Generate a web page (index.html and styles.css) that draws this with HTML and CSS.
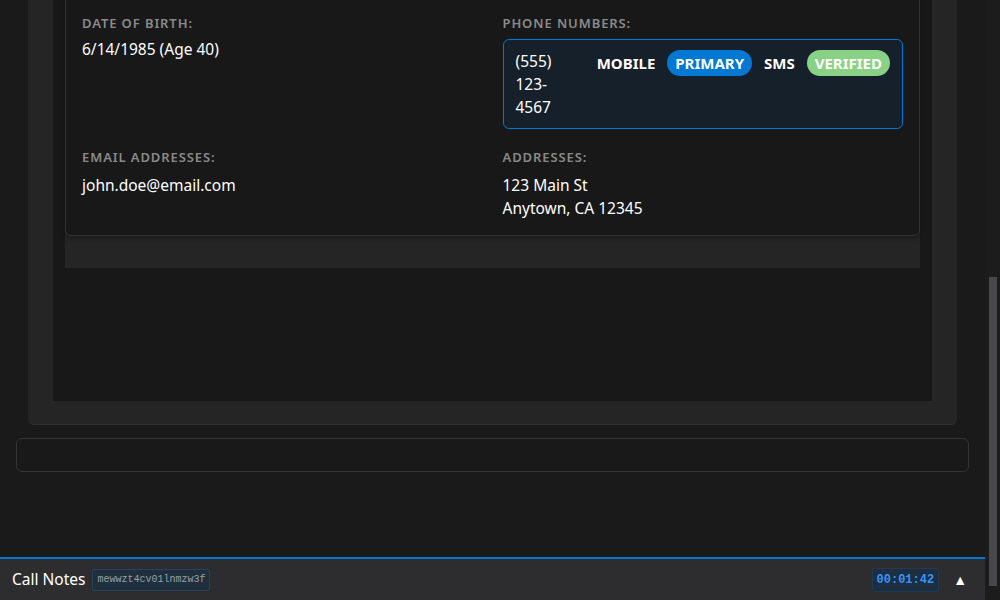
FILE: index.html
```html
<!DOCTYPE html>
<html lang="en">
<head>
<meta charset="utf-8">
<title>Call Notes</title>
<link rel="stylesheet" href="styles.css">
</head>
<body>
<div class="app">
  <div class="main">
    <div class="viewport">
      <div class="scroll-content">
        <div class="panel">
          <div class="panel-inner">
            <div class="section">
              <div class="card">
                <div class="field-grid">
                  <div class="field">
                    <div class="label">Date of Birth:</div>
                    <div class="value">6/14/1985 (Age 40)</div>
                  </div>
                  <div class="field">
                    <div class="label">Phone Numbers:</div>
                    <div class="phone-box">
                      <div class="phone-number">(555) 123-4567</div>
                      <div class="badges">
                        <span class="badge">Mobile</span>
                        <span class="badge badge-primary">Primary</span>
                        <span class="badge">SMS</span>
                        <span class="badge badge-verified">Verified</span>
                      </div>
                    </div>
                  </div>
                  <div class="field">
                    <div class="label">Email Addresses:</div>
                    <div class="value lines">john.doe@email.com</div>
                  </div>
                  <div class="field">
                    <div class="label">Addresses:</div>
                    <div class="value lines">123 Main St<br>Anytown, CA 12345</div>
                  </div>
                </div>
              </div>
            </div>
          </div>
        </div>
        <div class="notes-box"></div>
      </div>
    </div>
    <div class="callbar">
      <span class="callbar-title">Call Notes</span>
      <span class="call-id">mewwzt4cv01lnmzw3f</span>
      <span class="spacer"></span>
      <span class="timer">00:01:42</span>
      <span class="toggle">&#9650;</span>
    </div>
  </div>
  <div class="scrollbar"><div class="thumb"></div></div>
</div>
</body>
</html>
```

FILE: styles.css
```css
* { box-sizing: border-box; }
html, body { margin: 0; padding: 0; }
body {
  background: #1a1a1a;
  color: #ffffff;
  font-family: "Noto Sans", "Open Sans", sans-serif;
  font-size: 15.5px;
  line-height: 1.5;
}
.app {
  display: flex;
  width: 1000px;
  height: 600px;
  overflow: hidden;
}
.main {
  flex: 1;
  display: flex;
  flex-direction: column;
  min-width: 0;
}
.viewport {
  flex: 1;
  overflow: hidden;
}
.scroll-content {
  margin-top: -56px;
  padding: 16px;
}
.panel {
  margin: 0 12px;
  background: #252525;
  border-radius: 0 0 6px 6px;
  border-bottom: 1px solid #2e2e2e;
  padding: 25px 25px 23px;
}
.panel-inner {
  background: #181818;
  padding: 12px 12px 133px;
}
.section {
  background: #252525;
  padding-bottom: 32px;
}
.card {
  background: #181818;
  border: 1px solid #333333;
  border-radius: 0 0 6px 6px;
  padding: 16px 16px 15px;
  box-shadow: 0 2px 4px rgba(0, 0, 0, 0.3);
}
.field-grid {
  display: grid;
  grid-template-columns: 1fr 1fr;
  column-gap: 20px;
  row-gap: 19px;
}
.label {
  font-size: 13px;
  font-weight: 600;
  letter-spacing: 0.9px;
  text-transform: uppercase;
  color: #8a8a8a;
  line-height: 1.5;
  margin-bottom: 4px;
}
.value {
  color: #ffffff;
}
.lines {
  margin-top: 6px;
}
.phone-box {
  margin-top: 5px;
  display: flex;
  align-items: flex-start;
  gap: 12px;
  background: #16202a;
  border: 1px solid #0078d4;
  border-radius: 6px;
  padding: 10px 12px 9px;
}
.phone-number {
  flex: 1;
  min-width: 0;
}
.badges {
  display: flex;
  gap: 4px;
  flex: none;
}
.badge {
  height: 26px;
  line-height: 26px;
  padding: 0 8px;
  border-radius: 13px;
  font-size: 15px;
  font-weight: 700;
  text-transform: uppercase;
  color: #ffffff;
}
.badge-primary { background: #0078d4; }
.badge-verified { background: #89d185; }
.notes-box {
  margin-top: 13px;
  height: 34px;
  border: 1px solid #353535;
  border-radius: 6px;
  background: #191919;
}
.callbar {
  height: 43px;
  flex: none;
  display: flex;
  align-items: center;
  background: #2d2d30;
  border-top: 2px solid #0078d4;
  padding: 0 12px;
}
.callbar-title {
  font-size: 15.5px;
  color: #ffffff;
  margin-right: 7px;
}
.call-id {
  font-family: "Liberation Mono", "DejaVu Sans Mono", monospace;
  font-size: 10px;
  line-height: 20px;
  color: #9aa0a6;
  background: #1f2f3d;
  border: 1px solid #26435a;
  border-radius: 2px;
  padding: 0 4px;
}
.spacer { flex: 1; }
.timer {
  font-family: "Liberation Mono", "DejaVu Sans Mono", monospace;
  font-size: 12px;
  font-weight: 700;
  line-height: 22px;
  color: #3794ff;
  background: #1c2e40;
  border: 1px solid #1f3a52;
  border-radius: 2px;
  padding: 0 4px;
}
.toggle {
  font-size: 14px;
  color: #ffffff;
  margin-left: 14px;
  margin-right: 6px;
}
.scrollbar {
  width: 15px;
  flex: none;
  background: #1c1c1c;
  padding-top: 277px;
  padding-left: 4px;
  padding-right: 3px;
}
.thumb {
  height: 309px;
  background: #48484c;
}
```
